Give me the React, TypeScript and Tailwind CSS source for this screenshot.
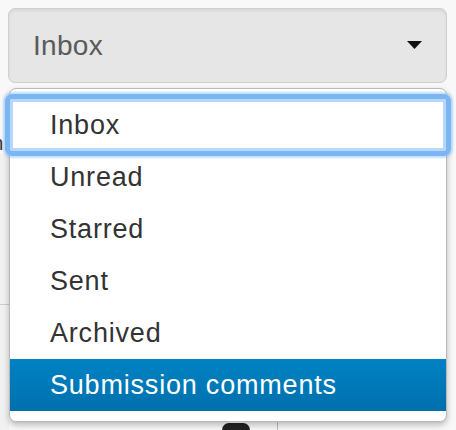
import React from "react";

const items = ["Inbox", "Unread", "Starred", "Sent", "Archived", "Submission comments"];

export default function App() {
  const focused = 0;
  const active = 5;

  return (
    <div
      className="relative h-[430px] w-[456px] overflow-hidden bg-[#f8f8f8]"
      style={{ fontFamily: '"Liberation Sans", Arial, sans-serif' }}
    >
      <div className="px-2 pt-2">
        <button className="flex h-[75px] w-[439px] items-center justify-between rounded-[7px] border border-[#cfcfcf] bg-[#e6e6e6] pl-6 pr-6 shadow-[inset_0_2px_3px_rgba(0,0,0,0.07)]">
          <span className="text-[28px] tracking-[0.3px] text-[#5a5a5a]">Inbox</span>
          <svg width="15" height="8" viewBox="0 0 15 8" className="mt-[-2px]">
            <path d="M0 0h15L7.5 8z" fill="#111" />
          </svg>
        </button>
      </div>

      {/* page content behind the open menu */}
      <div className="mt-[5px] flex h-[342px]">
        <div className="flex w-[9px] flex-col bg-[#f1f1f1]">
          <div className="h-[44px] bg-[#f8f8f8]" />
          <div className="flex h-[22px] justify-end overflow-hidden whitespace-nowrap bg-[#f8f8f8] text-[20px] leading-[22px] text-[#333]">
            <span>ion.</span>
          </div>
          <div className="h-[150px]" />
          <div className="h-px bg-[#cccccc]" />
        </div>
        <div className="flex flex-1 flex-col justify-end">
          <div className="flex h-[8px] items-end">
            <div className="ml-[213px] h-[7px] w-[28px] rounded-t-[8px] bg-[#222]" />
            <div className="ml-[27px] h-full w-px bg-[#bbbbbb]" />
          </div>
        </div>
      </div>

      <ul className="absolute left-[9px] top-[88px] w-[438px] rounded-[7px] border border-[#b9b9b9] bg-white py-[10px] shadow-[0_3px_6px_rgba(0,0,0,0.25)]">
        {items.map((label, i) => (
          <li
            key={label}
            className={
              i === active
                ? "h-[52px] bg-gradient-to-b from-[#0082c4] to-[#0070ac] pl-10 text-[27px] leading-[52px] tracking-[0.8px] text-white"
                : i === focused
                  ? "relative z-10 h-[52px] rounded-[3px] bg-white pl-10 text-[27px] leading-[52px] tracking-[0.8px] text-[#333] shadow-[inset_0_0_0_3px_#b8d7fb,0_0_0_5px_#7ab5f4,0_0_2px_7px_rgba(122,181,244,0.45)]"
                  : "h-[52px] pl-10 text-[27px] leading-[52px] tracking-[0.8px] text-[#333]"
            }
          >
            {label}
          </li>
        ))}
      </ul>
    </div>
  );
}
